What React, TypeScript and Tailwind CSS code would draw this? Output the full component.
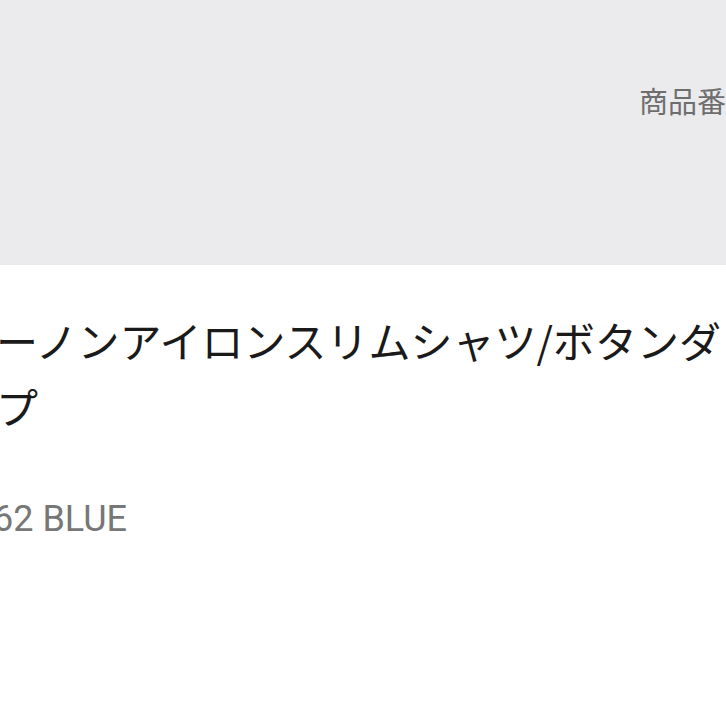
export default function App() {
  const jp = { fontFamily: '"Noto Sans CJK JP", "Noto Sans", sans-serif' };
  return (
    <div className="w-[726px] h-[726px] overflow-hidden bg-white" style={jp}>
      <div className="h-[265px] bg-[#ebebed] overflow-hidden">
        <div className="pt-[82px] pl-[639px] whitespace-nowrap text-[29px] leading-[36px] text-[#6e6e6e]">
          商品番号
        </div>
      </div>
      <div className="pt-[42px] ml-[-4px] whitespace-nowrap text-[42px] leading-[66px] text-[#1a1a1a]">
        ーノンアイロンスリムシャツ/ボタンダウン
        <br />
        プ
      </div>
      <div className="mt-[62px] ml-[-7px] whitespace-nowrap text-[36px] leading-[36px] text-[#777777]" style={{ fontFamily: 'Roboto, "Noto Sans CJK JP", sans-serif' }}>
        62 BLUE
      </div>
    </div>
  );
}
